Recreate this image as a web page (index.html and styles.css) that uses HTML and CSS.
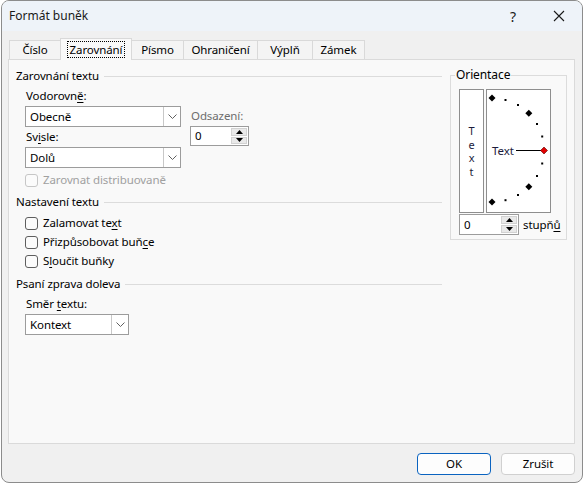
FILE: index.html
```html
<!DOCTYPE html>
<html lang="cs">
<head>
<meta charset="utf-8">
<title>Formát buněk</title>
<link rel="stylesheet" href="styles.css">
</head>
<body>
<div class="window">
  <div class="titlebar">
    <span class="title">Formát buněk</span>
    <span class="tb-btn tb-help">?</span>
    <span class="tb-btn tb-close"><svg width="12" height="12" viewBox="0 0 12 12"><path d="M1 1 L11 11 M11 1 L1 11" stroke="#1a1a1a" stroke-width="1.1" fill="none"/></svg></span>
  </div>

  <div class="tabs">
    <div class="tab tab-cislo">Číslo</div>
    <div class="tab tab-zarovnani active"><span class="focus">Zarovnání</span></div>
    <div class="tab tab-pismo">Písmo</div>
    <div class="tab tab-ohraniceni">Ohraničení</div>
    <div class="tab tab-vypln">Výplň</div>
    <div class="tab tab-zamek">Zámek</div>
  </div>

  <div class="panel">
    <div class="left">
      <div class="group-head">Zarovnání textu</div>
      <div class="align-row">
        <div class="align-main">
          <div class="label lbl-first">Vodorovn<u>ě</u>:</div>
          <div class="combo combo-wide"><span class="combo-text">Obecně</span><span class="drop"><svg width="9" height="5" viewBox="0 0 9 5"><path d="M0.5 0.5 L4.5 4.5 L8.5 0.5" stroke="#606060" fill="none"/></svg></span></div>
          <div class="label lbl-next">Sv<u>i</u>sle:</div>
          <div class="combo combo-wide"><span class="combo-text">Dolů</span><span class="drop"><svg width="9" height="5" viewBox="0 0 9 5"><path d="M0.5 0.5 L4.5 4.5 L8.5 0.5" stroke="#606060" fill="none"/></svg></span></div>
        </div>
        <div class="indent-col">
          <div class="label disabled-lbl">Odsazení:</div>
          <div class="spin spin-indent">
            <span class="spin-val">0</span>
            <span class="spin-btns">
              <span class="spin-up"><svg width="7" height="4" viewBox="0 0 7 4"><path d="M0 4 L3.5 0 L7 4Z" fill="#000"/></svg></span>
              <span class="spin-down"><svg width="7" height="4" viewBox="0 0 7 4"><path d="M0 0 L3.5 4 L7 0Z" fill="#000"/></svg></span>
            </span>
          </div>
        </div>
      </div>
      <div class="check check-dis"><span class="box box-dis"></span><span class="check-text">Zarovnat distribuovaně</span></div>

      <div class="group-head gh2">Nastavení textu</div>
      <div class="check check-first"><span class="box"></span><span class="check-text">Zalamovat te<u>x</u>t</span></div>
      <div class="check check-next"><span class="box"></span><span class="check-text">Přizpůsobovat buň<u>c</u>e</span></div>
      <div class="check check-next"><span class="box"></span><span class="check-text">S<u>l</u>oučit buňky</span></div>

      <div class="group-head gh3">Psaní zprava doleva</div>
      <div class="label lbl-smer">Směr <u>t</u>extu:</div>
      <div class="combo combo-narrow"><span class="combo-text">Kontext</span><span class="drop"><svg width="9" height="5" viewBox="0 0 9 5"><path d="M0.5 0.5 L4.5 4.5 L8.5 0.5" stroke="#606060" fill="none"/></svg></span></div>
    </div>

    <div class="right">
      <div class="orient">
        <div class="legend">Orientace</div>
        <div class="orient-boxes">
          <div class="vbox"><span>T</span><span>e</span><span>x</span><span>t</span></div>
          <div class="arcbox">
            <svg width="63" height="122" viewBox="0 0 63 122">
              <g fill="#000">
                <path d="M5 4.5 L8.5 8 L5 11.5 L1.5 8Z"/>
                <rect x="17.5" y="9" width="2" height="2"/>
                <rect x="30" y="14" width="2" height="2"/>
                <path d="M41.8 19.7 L45.3 23.2 L41.8 26.7 L38.3 23.2Z"/>
                <rect x="49" y="33" width="2" height="2"/>
                <rect x="54.2" y="45.5" width="2" height="2"/>
                <rect x="54.2" y="72.5" width="2" height="2"/>
                <rect x="49" y="85" width="2" height="2"/>
                <path d="M41.8 93.3 L45.3 96.8 L41.8 100.3 L38.3 96.8Z"/>
                <rect x="30" y="104" width="2" height="2"/>
                <rect x="17.5" y="109.2" width="2" height="2"/>
                <path d="M5 108.5 L8.5 112 L5 115.5 L1.5 112Z"/>
              </g>
              <text x="5" y="64.5" font-family="Noto Sans, sans-serif" font-size="11.5" fill="#1c1c3c">Text</text>
              <line x1="29" y1="60.5" x2="54" y2="60.5" stroke="#000" stroke-width="1"/>
              <path d="M57 57 L60.5 60.5 L57 64 L53.5 60.5Z" fill="#e10000" stroke="#5a0000" stroke-width="0.6"/>
            </svg>
          </div>
        </div>
        <div class="orient-spin-row">
          <div class="spin spin-deg">
            <span class="spin-val">0</span>
            <span class="spin-btns">
              <span class="spin-up"><svg width="7" height="4" viewBox="0 0 7 4"><path d="M0 4 L3.5 0 L7 4Z" fill="#000"/></svg></span>
              <span class="spin-down"><svg width="7" height="4" viewBox="0 0 7 4"><path d="M0 0 L3.5 4 L7 0Z" fill="#000"/></svg></span>
            </span>
          </div>
          <span class="deg-lbl">stupň<u>ů</u></span>
        </div>
      </div>
    </div>
  </div>

  <div class="buttons">
    <div class="btn btn-default">OK</div>
    <div class="btn">Zrušit</div>
  </div>
</div>
</body>
</html>
```

FILE: styles.css
```css
html, body {
  margin: 0;
  padding: 0;
  background: #ffffff;
}
body {
  font-family: "Noto Sans", "Open Sans", sans-serif;
  font-size: 11.5px;
  letter-spacing: -0.1px;
  color: #000;
}
u { text-underline-offset: 2px; }

.window {
  margin-left: 1px;
  width: 582px;
  height: 483px;
  box-sizing: border-box;
  border: 1px solid #8c8c8c;
  border-radius: 8px;
  background: #f0f0f0;
  overflow: hidden;
  display: flex;
  flex-direction: column;
}

.titlebar {
  flex: none;
  height: 30px;
  background: #eef3f9;
  display: flex;
  align-items: center;
  padding-left: 7px;
}
.title { flex: 1; line-height: 16px; color: #1a1a1a; font-size: 12px; letter-spacing: 0; }
.tb-btn {
  width: 46px;
  height: 30px;
  display: flex;
  align-items: center;
  justify-content: center;
}
.tb-help { font-size: 14px; color: #1a1a1a; }

.tabs {
  flex: none;
  height: 28px;
  box-sizing: border-box;
  display: flex;
  align-items: flex-end;
  padding-left: 7px;
  position: relative;
  z-index: 2;
}
.tab {
  height: 19px;
  box-sizing: border-box;
  border: 1px solid #d9d9d9;
  border-bottom: none;
  margin-left: -1px;
  background: #f4f4f4;
  display: flex;
  align-items: center;
  justify-content: center;
  line-height: 16px;
}
.tab-cislo { margin-left: 0; width: 52px; }
.tab-zarovnani { width: 72px; }
.tab-pismo { width: 53px; }
.tab-ohraniceni { width: 75px; }
.tab-vypln { width: 56px; }
.tab-zamek { width: 53px; }
.tab.active {
  height: 22px;
  margin-bottom: -1px;
  background: #f9f9f9;
  padding-bottom: 1px;
}
.focus {
  border: 1px dotted #000;
  padding: 0 2px;
  line-height: 15px;
}

.panel {
  flex: none;
  height: 385px;
  box-sizing: border-box;
  margin: 0 7px 0 6px;
  border: 1px solid #dadada;
  background: #f9f9f9;
  display: flex;
  align-items: flex-start;
}

.left {
  width: 433px;
  box-sizing: border-box;
  padding: 8px 0 0 7px;
}
.group-head {
  display: flex;
  align-items: center;
  line-height: 16px;
  white-space: nowrap;
}
.group-head::after {
  content: "";
  flex: 1;
  height: 1px;
  background: #dcdcdc;
  margin-left: 5px;
}
.gh2 { margin-top: 6px; }
.gh3 { margin-top: 7px; }

.label { line-height: 16px; padding-left: 10px; }
.lbl-first { margin-top: 4px; }
.lbl-next { margin-top: 2px; }
.lbl-smer { margin-top: 4px; }
.disabled-lbl { color: #6d6d6d; padding-left: 1px; }

.align-row { display: flex; align-items: flex-start; }
.indent-col { margin-left: 9px; padding-top: 24px; }

.combo {
  margin-left: 9px;
  margin-top: 2px;
  height: 21px;
  box-sizing: border-box;
  border: 1px solid #9c9c9c;
  background: #fff;
  display: flex;
  align-items: stretch;
}
.combo-wide { width: 156px; }
.combo-narrow { width: 104px; }
.combo-text {
  flex: 1;
  padding-left: 4px;
  line-height: 19px;
}
.drop {
  width: 16px;
  border-left: 1px solid #c8c8c8;
  display: flex;
  align-items: center;
  justify-content: center;
}

.spin {
  height: 20px;
  box-sizing: border-box;
  border: 1px solid #9c9c9c;
  background: #fff;
  display: flex;
  align-items: stretch;
}
.spin-indent { width: 59px; margin-top: 2px; }
.spin-deg { width: 60px; height: 21px; }
.spin-val { flex: 1; padding-left: 4px; line-height: 18px; }
.spin-deg .spin-val { line-height: 19px; }
.spin-btns {
  width: 16px;
  display: flex;
  flex-direction: column;
  padding: 1px 1px 1px 0;
  gap: 1px;
}
.spin-up, .spin-down {
  flex: 1;
  background: #e9e9e9;
  border: 1px solid #d2d2d2;
  display: flex;
  align-items: center;
  justify-content: center;
}

.check {
  display: flex;
  align-items: center;
  line-height: 16px;
  padding-left: 9px;
}
.check-dis { margin-top: 4px; color: #a0a0a0; }
.check-first { margin-top: 5px; }
.check-next { margin-top: 3px; }
.box {
  width: 13px;
  height: 13px;
  box-sizing: border-box;
  border: 1px solid #5e5e5e;
  border-radius: 3px;
  background: #fbfbfb;
  margin-right: 5px;
}
.box-dis { border-color: #c6c6c6; }

.right { margin-left: 8px; }
.orient {
  margin-top: 15px;
  width: 117px;
  box-sizing: border-box;
  border: 1px solid #dcdcdc;
  padding: 0 0 4px 8px;
}
.legend {
  width: fit-content;
  margin: -9px 0 0 -4px;
  padding: 0 1px;
  background: #f9f9f9;
  line-height: 16px;
  font-size: 12px;
}
.orient-boxes {
  display: flex;
  gap: 2px;
  margin-top: 6px;
}
.vbox {
  width: 25px;
  height: 124px;
  box-sizing: border-box;
  border: 1px solid #8e8e8e;
  background: #fff;
  display: flex;
  flex-direction: column;
  align-items: center;
  justify-content: center;
  line-height: 13.5px;
  font-size: 11px;
  color: #1c1c3c;
}
.arcbox {
  width: 65px;
  height: 124px;
  box-sizing: border-box;
  border: 1px solid #8e8e8e;
  background: #fff;
}
.arcbox svg { display: block; }
.orient-spin-row {
  margin-top: 1px;
  display: flex;
  align-items: center;
}
.deg-lbl { margin-left: 4px; line-height: 16px; }

.buttons {
  flex: none;
  display: flex;
  justify-content: flex-end;
  gap: 10px;
  padding-right: 7px;
  margin-top: 9px;
}
.btn {
  width: 74px;
  height: 22px;
  box-sizing: border-box;
  border: 1px solid #d0d0d0;
  border-radius: 4px;
  background: #fdfdfd;
  display: flex;
  align-items: center;
  justify-content: center;
  line-height: 16px;
}
.btn-default { border-color: #0a63c0; }
```
